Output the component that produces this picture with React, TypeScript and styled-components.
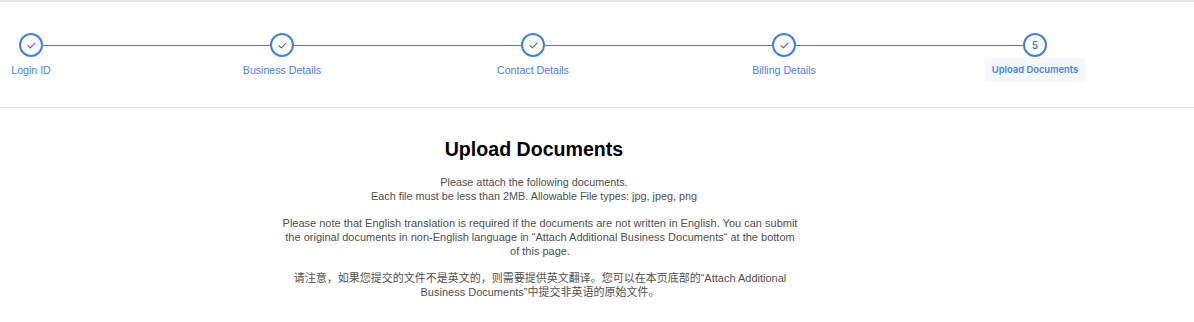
import styled, { createGlobalStyle } from "styled-components";

const GlobalStyle = createGlobalStyle`
  html, body {
    margin: 0;
    padding: 0;
    background: #fff;
  }
  body {
    font-family: "Liberation Sans", Arial, "Noto Sans CJK SC", sans-serif;
  }
`;

const StepperBar = styled.div`
  border-top: 2px solid #e3e5e8;
  border-bottom: 1px solid #e6e6e6;
  padding: 31px 0 25px 19px;
`;

const StepList = styled.div`
  display: flex;
`;

const Step = styled.div<{ $last?: boolean }>`
  display: flex;
  flex-direction: column;
  width: ${(p) => (p.$last ? "auto" : "251px")};
`;

const StepHead = styled.div`
  display: flex;
  align-items: center;
`;

const Circle = styled.div`
  box-sizing: border-box;
  width: 24px;
  height: 24px;
  flex: none;
  border: 2px solid #3f80ee;
  border-radius: 50%;
  display: flex;
  align-items: center;
  justify-content: center;
  color: #3f74e0;
  font-family: Inter, "Noto Sans", sans-serif;
  font-size: 10px;
  font-weight: 600;
`;

const Connector = styled.div`
  flex: 1;
  height: 1px;
  background: #3a7cf0;
`;

const LabelRow = styled.div`
  width: 24px;
  display: flex;
  justify-content: center;
  margin-top: 1px;
`;

const StepLabel = styled.div<{ $active?: boolean }>`
  white-space: nowrap;
  padding: 4px 7px;
  border-radius: 3px;
  line-height: 16px;
  color: #4a7ff0;
  background: ${(p) => (p.$active ? "#f4f7fe" : "transparent")};
  font-family: ${(p) =>
    p.$active ? 'Inter, "Noto Sans", sans-serif' : '"Liberation Sans", Arial, sans-serif'};
  font-weight: ${(p) => (p.$active ? 600 : 400)};
  font-size: ${(p) => (p.$active ? "9.4px" : "10.6px")};
`;

const Main = styled.div`
  width: 1080px;
  text-align: center;
  padding-top: 29px;
`;

const Inner = styled.div`
  width: 520px;
  margin: 0 auto;
`;

const Intro = styled.div`
  padding-right: 12px;
`;

const Title = styled.h1`
  margin: 0 0 14px;
  font-size: 19.6px;
  line-height: 24px;
  font-weight: 700;
  color: #000;
`;

const Note = styled.p<{ $size?: number }>`
  margin: 0 0 13px;
  font-size: ${(p) => p.$size ?? 11}px;
  line-height: 14px;
  color: #4f4f4f;
`;

const Check = () => (
  <svg width="9" height="7" viewBox="0 0 9 7">
    <polyline
      points="1,3.6 3.4,5.8 8,1.2"
      fill="none"
      stroke="#4a6fc8"
      strokeWidth="1.2"
      strokeLinecap="round"
      strokeLinejoin="round"
    />
  </svg>
);

const steps = [
  "Login ID",
  "Business Details",
  "Contact Details",
  "Billing Details",
  "Upload Documents",
];

export default function App() {
  const current = 4;
  return (
    <>
      <GlobalStyle />
      <StepperBar>
        <StepList>
          {steps.map((label, i) => {
            const last = i === steps.length - 1;
            return (
              <Step key={label} $last={last}>
                <StepHead>
                  <Circle>{i < current ? <Check /> : i + 1}</Circle>
                  {!last && <Connector />}
                </StepHead>
                <LabelRow>
                  <StepLabel $active={i === current}>{label}</StepLabel>
                </LabelRow>
              </Step>
            );
          })}
        </StepList>
      </StepperBar>
      <Main>
        <Inner>
          <Intro>
            <Title>Upload Documents</Title>
            <Note $size={10.8}>
              Please attach the following documents.
              <br />
              Each file must be less than 2MB. Allowable File types: jpg, jpeg, png
            </Note>
          </Intro>
          <Note>
            Please note that English translation is required if the documents are not
            written in English. You can submit the original documents in non-English
            language in “Attach Additional Business Documents“ at the bottom of this page.
          </Note>
          <Note>
            请注意，如果您提交的文件不是英文的，则需要提供英文翻译。您可以在本页底部的“Attach
            Additional Business Documents”中提交非英语的原始文件。
          </Note>
        </Inner>
      </Main>
    </>
  );
}
